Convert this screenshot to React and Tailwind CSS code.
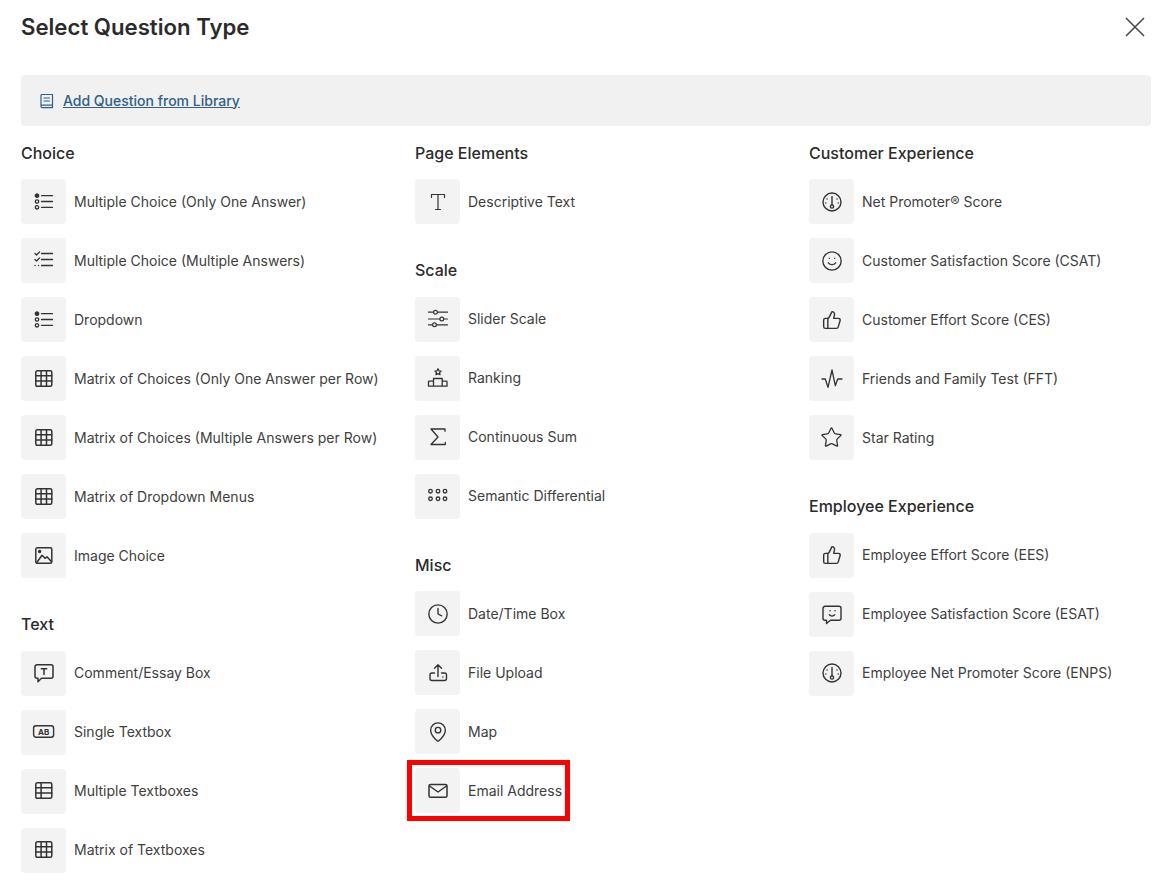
import React from 'react';
import { ThumbsUp, Star, Smile, Clock, MapPin } from 'lucide-react';

const Svg = ({ children, sw = 1.3 }) => (
  <svg width="24" height="24" viewBox="0 0 24 24" fill="none" stroke="currentColor" strokeWidth={sw} strokeLinecap="round" strokeLinejoin="round">
    {children}
  </svg>
);

const ListIcon = () => (
  <Svg>
    <circle cx="5" cy="5.7" r="1.7" fill="currentColor" />
    <circle cx="5" cy="11.5" r="1.7" />
    <circle cx="5" cy="17.3" r="1.7" />
    <path d="M9.5 5.7h11M9.5 11.5h11M9.5 17.3h11" />
  </Svg>
);

const CheckListIcon = () => (
  <Svg>
    <path d="M3 4.5l1.5 1.5 3-3M3 10.5l1.5 1.5 3-3M3 16.5h.1M6.5 16.5h.1" />
    <path d="M9.5 4.5h11M9.5 10.5h11M9.5 16.5h11" />
  </Svg>
);

const GridIcon = () => (
  <Svg sw={1.5}>
    <rect x="3.8" y="3.8" width="16" height="15.5" rx="1.5" />
    <path d="M9.1 3.8v15.5M14.5 3.8v15.5M3.8 8.8h16M3.8 14h16" />
  </Svg>
);

const TableIcon = () => (
  <Svg sw={1.5}>
    <rect x="3.8" y="3.8" width="16" height="15.5" rx="1.5" />
    <path d="M9.1 3.8v15.5M3.8 8.8h16M3.8 14h16" />
  </Svg>
);

const ImageIcon = () => (
  <Svg sw={1.5}>
    <rect x="3.8" y="3.8" width="16" height="15.5" rx="1.5" />
    <circle cx="7.6" cy="7.4" r="1" fill="currentColor" />
    <path d="M5 18.3l5-7 3 3 2-1.5 4.5 5" />
  </Svg>
);

const CommentIcon = () => (
  <Svg sw={1.5}>
    <path d="M5 3.8h14a2 2 0 0 1 2 2v9.5a2 2 0 0 1-2 2H9.5L6 20.8v-3.5H5a2 2 0 0 1-2-2V5.8a2 2 0 0 1 2-2z" />
    <path d="M9.3 7.8h5.4M12 7.8v5.6" />
  </Svg>
);

const TextboxIcon = () => (
  <Svg sw={1.4}>
    <rect x="1.6" y="5.8" width="20" height="11.5" rx="2.5" />
    <text x="11.6" y="14.6" textAnchor="middle" fontSize="8" fontWeight="700" fontFamily="Inter, sans-serif" fill="currentColor" stroke="none">AB</text>
  </Svg>
);

const SerifTIcon = () => (
  <Svg sw={1.2}>
    <path d="M5.5 7.5V4.5h13v3M12 4.5v15M9.5 19.5h5" />
  </Svg>
);

const SliderIcon = () => (
  <Svg sw={1.2}>
    <path d="M2.5 5.2h19M2.5 12h19M2.5 17.8h19" />
    <circle cx="9.5" cy="5.2" r="1.9" fill="#f3f3f3" />
    <circle cx="15.8" cy="12" r="1.9" fill="#f3f3f3" />
    <circle cx="8.5" cy="17.8" r="1.9" fill="#f3f3f3" />
  </Svg>
);

const RankingIcon = () => (
  <Svg sw={1.3}>
    <path d="M12 2.8l1 2 2.1.3-1.5 1.5.4 2.1-2-1-2 1 .4-2.1-1.5-1.5 2.1-.3z" />
    <path d="M7.5 20.2v-7.7h8.7v7.7M7.5 15.2H3a.5.5 0 0 0-.5.5v4.5H21v-4.5a.5.5 0 0 0-.5-.5h-4.3" />
  </Svg>
);

const SigmaIcon = () => (
  <Svg sw={1.3}>
    <path d="M19 6.3V4H5l7 8-7 7.5h14.3v-2.2" />
  </Svg>
);

const DotsIcon = () => (
  <Svg sw={1.3}>
    {[4.5, 12, 19].map(x => (
      <React.Fragment key={x}>
        <circle cx={x} cy="7.2" r="1.8" />
        <circle cx={x} cy="14.8" r="1.8" />
      </React.Fragment>
    ))}
  </Svg>
);

const UploadIcon = () => (
  <Svg sw={1.4}>
    <path d="M8.5 12H6a2 2 0 0 0-2 2v3.5a2 2 0 0 0 2 2h12.5a2 2 0 0 0 2-2V14a2 2 0 0 0-2-2H15.5" />
    <path d="M12 15.5V3.8M8.5 7.3 12 3.8l3.5 3.5M16.8 16h.1" />
  </Svg>
);

const MailIcon = () => (
  <Svg sw={1.5}>
    <rect x="3" y="5.5" width="18" height="12.8" rx="1.6" />
    <path d="M3.5 7l8.5 6 8.5-6" />
  </Svg>
);

const GaugeIcon = () => (
  <Svg sw={1.4}>
    <circle cx="12" cy="12" r="9" />
    <circle cx="12" cy="16.5" r="1.6" />
    <path d="M12 14.9V6.5M7 9h.1M17 9h.1M5.8 13h.1M18.2 13h.1" />
  </Svg>
);

const PulseIcon = () => (
  <Svg sw={1.3}>
    <path d="M2 12h3.3L8 20.3 12 3l3.3 15.7L17.7 12H22" />
  </Svg>
);

const BubbleSmileIcon = () => (
  <Svg sw={1.4}>
    <path d="M5 4.3h14a2 2 0 0 1 2 2v10a2 2 0 0 1-2 2h-8.5l-4 3.2v-3.2H5a2 2 0 0 1-2-2v-10a2 2 0 0 1 2-2z" />
    <path d="M10 8.7h.1M15 8.7h.1M9.3 12.8c1.5 1.5 3.9 1.5 5.4 0" />
  </Svg>
);

const columns = [
  [
    ['Choice', [
      [ListIcon, 'Multiple Choice (Only One Answer)'],
      [CheckListIcon, 'Multiple Choice (Multiple Answers)'],
      [ListIcon, 'Dropdown'],
      [GridIcon, 'Matrix of Choices (Only One Answer per Row)'],
      [GridIcon, 'Matrix of Choices (Multiple Answers per Row)'],
      [GridIcon, 'Matrix of Dropdown Menus'],
      [ImageIcon, 'Image Choice'],
    ]],
    ['Text', [
      [CommentIcon, 'Comment/Essay Box'],
      [TextboxIcon, 'Single Textbox'],
      [TableIcon, 'Multiple Textboxes'],
      [GridIcon, 'Matrix of Textboxes'],
    ]],
  ],
  [
    ['Page Elements', [[SerifTIcon, 'Descriptive Text']]],
    ['Scale', [
      [SliderIcon, 'Slider Scale'],
      [RankingIcon, 'Ranking'],
      [SigmaIcon, 'Continuous Sum'],
      [DotsIcon, 'Semantic Differential'],
    ]],
    ['Misc', [
      [() => <Clock size={22} strokeWidth={1.5} />, 'Date/Time Box'],
      [UploadIcon, 'File Upload'],
      [() => <MapPin size={22} strokeWidth={1.5} />, 'Map'],
      [MailIcon, 'Email Address', true],
    ]],
  ],
  [
    ['Customer Experience', [
      [GaugeIcon, 'Net Promoter® Score'],
      [() => <Smile size={22} strokeWidth={1.5} />, 'Customer Satisfaction Score (CSAT)'],
      [() => <ThumbsUp size={20} strokeWidth={1.7} />, 'Customer Effort Score (CES)'],
      [PulseIcon, 'Friends and Family Test (FFT)'],
      [() => <Star size={23} strokeWidth={1.35} />, 'Star Rating'],
    ]],
    ['Employee Experience', [
      [() => <ThumbsUp size={20} strokeWidth={1.7} />, 'Employee Effort Score (EES)'],
      [BubbleSmileIcon, 'Employee Satisfaction Score (ESAT)'],
      [GaugeIcon, 'Employee Net Promoter Score (ENPS)'],
    ]],
  ],
];

const Row = ({ icon: Icon, label, marked }) => (
  <div className="relative flex items-center gap-2 h-[45px]">
    <div className="w-[45px] h-[45px] shrink-0 flex items-center justify-center rounded bg-[#f3f3f3] text-[#333333]">
      <Icon />
    </div>
    <span className="text-sm leading-5 text-[#404040] whitespace-nowrap">{label}</span>
    {marked && <div className="absolute -left-2 -top-2 -bottom-2 w-[163px] border-[5px] border-[#ff0000]" />}
  </div>
);

const Section = ({ title, items, first }) => (
  <div className={first ? '' : 'mt-[34px]'}>
    <h3 className={`h-6 text-base leading-6 font-[450] text-[#2b2b2b] ${first ? 'mb-[14px]' : 'mb-[14.67px]'}`}>{title}</h3>
    <div className="flex flex-col gap-[14px]">
      {items.map(([icon, label, marked]) => (
        <Row key={label} icon={icon} label={label} marked={marked} />
      ))}
    </div>
  </div>
);

export default function App() {
  return (
    <div className="pl-[21px] pr-[5px] pt-[14px] bg-white font-['Inter',sans-serif]">
      <div className="flex items-center justify-between h-[26px] mb-[35px]">
        <h2 className="text-[22.2px] leading-[26px] font-semibold text-[#2b2b2b]">Select Question Type</h2>
        <button className="mr-[6px] text-[#444444]">
          <svg width="20" height="20" viewBox="0 0 20 20" fill="none" stroke="currentColor" strokeWidth="1.5">
            <path d="M1 1l18 18M19 1 1 19" />
          </svg>
        </button>
      </div>
      <div className="flex items-center gap-2 h-[51px] pl-[18px] rounded bg-[#f1f1f1] text-[#2f6084]">
        <svg width="16" height="16" viewBox="0 0 16 16" fill="none" stroke="currentColor" strokeWidth="1.2" strokeLinecap="round" strokeLinejoin="round">
          <path d="M2 13V2.5a1 1 0 0 1 1-1h10.5v10.7H3.2A1.2 1.2 0 0 0 2 13.4a1.2 1.2 0 0 0 1.2 1.2h10.3v-2.4" />
          <path d="M5 5h5.5M5 8h5.5" />
        </svg>
        <a href="#" className="text-sm font-medium underline">Add Question from Library</a>
      </div>
      <div className="grid grid-cols-[394px_394px_1fr] mt-[15px]">
        {columns.map((sections, i) => (
          <div key={i}>
            {sections.map(([title, items], j) => (
              <Section key={title} title={title} items={items} first={j === 0} />
            ))}
          </div>
        ))}
      </div>
    </div>
  );
}
